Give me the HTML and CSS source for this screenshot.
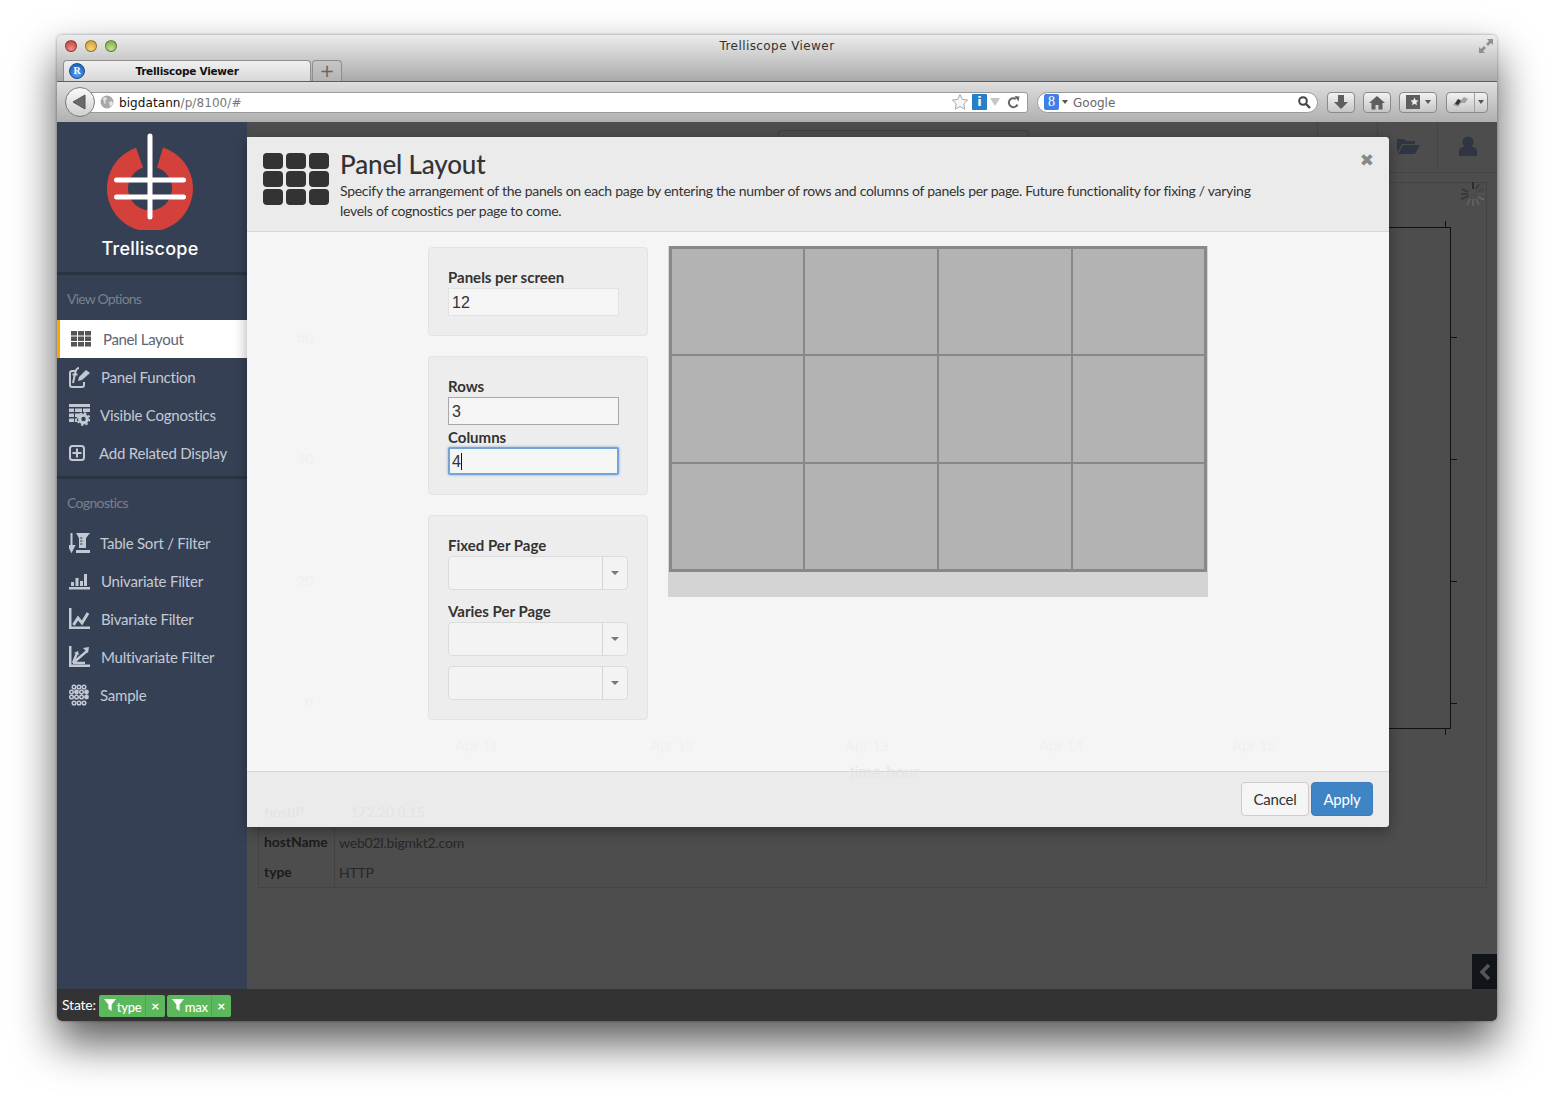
FILE: index.html
```html
<!DOCTYPE html>
<html lang="en">
<head>
<meta charset="utf-8">
<title>Trelliscope Viewer</title>
<link rel="stylesheet" href="styles.css">
</head>
<body>
<div class="window">
  <header class="titlebar">
    <div class="title-row">
      <div class="lights"><span class="light red"></span><span class="light yellow"></span><span class="light green"></span></div>
      <div class="win-title">Trelliscope Viewer</div>
      <svg class="resize" width="16" height="16" viewBox="0 0 16 16"><path d="M9 1h6v6l-2-2-3 3-2-2 3-3zM7 15H1V9l2 2 3-3 2 2-3 3z" fill="#8f8f8f"/></svg>
    </div>
    <div class="tab-row">
      <div class="tab">
        <span class="favicon">R</span>
        <span class="tab-label">Trelliscope Viewer</span>
        <span></span>
      </div>
      <div class="tab-new">+</div>
    </div>
  </header>
  <div class="toolbar">
    <div class="back"><svg width="14" height="16" viewBox="0 0 14 16"><path d="M13 1v14L1 8z" fill="#6a6a6a" stroke="#555"/></svg></div>
    <div class="urlbar">
      <svg class="globe" width="14" height="14" viewBox="0 0 14 14"><circle cx="7" cy="7" r="6.500" fill="#a8a8a8"/><path d="M3 3l3-1 1 2-2 2 1 3-2-1zM9 7l3-1 1 3-3 3z" fill="#e4e4e4"/></svg>
      <span class="url"><b>bigdatann</b>/p/8100/#</span>
      <span class="url-tools">
        <svg width="18" height="18" viewBox="0 0 18 18"><path d="M9 1.500l2.300 5 5.400.6-4 3.700 1.100 5.400L9 13.500l-4.800 2.700 1.100-5.400-4-3.700 5.400-.6z" fill="#f6f6f6" stroke="#a9a9a9"/></svg>
        <span class="info">i</span>
        <svg width="10" height="8" viewBox="0 0 10 8"><path d="M0 0h10L5 8z" fill="#c6c6c6"/></svg>
        <svg class="reload" width="13" height="13" viewBox="0 0 13 13"><path d="M10.500 8.500A4.500 4.500 0 1 1 9 3" fill="none" stroke="#666" stroke-width="2"/><path d="M7.500 0l5 .5-1 5z" fill="#666"/></svg>
      </span>
    </div>
    <div class="searchbar">
      <span class="gicon">8</span>
      <span class="caret-down"></span>
      <span class="search-text">Google</span>
      <svg width="13" height="13" viewBox="0 0 13 13"><circle cx="5" cy="5" r="3.800" fill="none" stroke="#444" stroke-width="2"/><path d="M8 8l4 4" stroke="#444" stroke-width="2.400"/></svg>
    </div>
    <div class="tbtn first"><svg width="16" height="16" viewBox="0 0 16 16"><path d="M5 1h6v7h4l-7 7-7-7h4z" fill="#5e5e5e"/></svg></div>
    <div class="tbtn"><svg width="16" height="15" viewBox="0 0 16 15"><path d="M8 1L0 8h2.500v6.500h4V10h3v4.500h4V8H16z" fill="#5e5e5e"/></svg></div>
    <div class="tbtn wide"><svg width="14" height="14" viewBox="0 0 14 14"><rect width="14" height="14" fill="#5e5e5e"/><path d="M8.500 2.500l1.200 2.700 2.800.3-2.100 1.900.6 2.900-2.500-1.500L6 10.300l.6-2.900-2.100-1.900 2.800-.3z" fill="#eee"/></svg><span class="caret-down"></span></div>
    <div class="tbtn split"><svg width="20" height="14" viewBox="0 0 20 14"><path d="M3 10l5-6 3 1 3-3 4 2-3 4-4 0-3 4z" fill="#a2a2a2"/><path d="M5 9l3-5 3 2-3 4z" fill="#333"/></svg><span class="split-arrow"><span class="caret-down"></span></span></div>
  </div>

  <div class="app">
    <div class="app-body">
      <aside class="sidebar">
        <div class="brand">
          <svg class="logo" width="100" height="100" viewBox="100 130 100 100">
            <path d="M136 147.800A43 43 0 1 0 163 147.500L157 167.600A22 22 0 1 1 143 167.600Z" fill="#d4403a"/>
            <path d="M150 136v81M116.500 180h67M116.500 197h67" stroke="#fff" stroke-width="5" stroke-linecap="round" fill="none"/>
          </svg>
          <div class="brand-name">Trelliscope</div>
        </div>
        <div class="group-title">View Options</div>
        <nav class="nav">
          <div class="item active">
            <svg width="20" height="16" viewBox="0 0 20 16"><g fill="#555"><rect width="6" height="4.500"/><rect x="7" width="6" height="4.500"/><rect x="14" width="6" height="4.500"/><rect y="5.500" width="6" height="4.500"/><rect x="7" y="5.500" width="6" height="4.500"/><rect x="14" y="5.500" width="6" height="4.500"/><rect y="11" width="6" height="4.500"/><rect x="7" y="11" width="6" height="4.500"/><rect x="14" y="11" width="6" height="4.500"/></g></svg>
            <span>Panel Layout</span>
          </div>
          <div class="item">
            <svg width="22" height="22" viewBox="0 0 22 22"><path d="M6 5H3a2 2 0 0 0-2 2v12a2 2 0 0 0 2 2h10a2 2 0 0 0 2-2v-3" fill="none" stroke="#c3c9d3" stroke-width="2"/><path d="M4 17l2-9c.5-3 1.500-6 4-6M3.500 8.500h5" fill="none" stroke="#c3c9d3" stroke-width="2"/><path d="M9 15l1-4 7-7 4 3-8 7z" fill="#c3c9d3"/></svg>
            <span>Panel Function</span>
          </div>
          <div class="item">
            <svg width="21" height="22" viewBox="0 0 21 22"><path d="M0 0h21v3H0zM0 4.500h5V8H0zM6 4.500h7V8H6zM14 4.500h7V8h-7zM0 9.500h5V13H0zM6 9.500h5V13H6zM0 14.500h5V18H0zM6 14.500h2V18H6z" fill="#c3c9d3"/><circle cx="14.500" cy="15" r="3.800" fill="none" stroke="#c3c9d3" stroke-width="3.200"/><circle cx="14.500" cy="15" r="6" fill="none" stroke="#c3c9d3" stroke-width="1.800" stroke-dasharray="2.300 2.400"/></svg>
            <span>Visible Cognostics</span>
          </div>
          <div class="item">
            <svg width="20" height="16" viewBox="0 0 20 16"><rect x="1" y="1" width="14" height="14" rx="2.500" fill="none" stroke="#c3c9d3" stroke-width="2"/><path d="M8 3.500v9M3.500 8h9" stroke="#c3c9d3" stroke-width="2"/></svg>
            <span>Add Related Display</span>
          </div>
        </nav>
        <div class="group-title second">Cognostics</div>
        <nav class="nav">
          <div class="item">
            <svg width="21" height="22" viewBox="0 0 21 22"><path d="M2.500 1v15M0 14l2.500 5 2.500-5z" fill="#c3c9d3" stroke="#c3c9d3" stroke-width="2"/><path d="M7 1h14l-4 5v10h-7V6z" fill="#c3c9d3"/><path d="M11 6h2.500M11 9h2.500M11 12h2.500" stroke="#364055"/><rect x="7" y="18" width="14" height="3" fill="#c3c9d3"/></svg>
            <span>Table Sort / Filter</span>
          </div>
          <div class="item">
            <svg width="22" height="18" viewBox="0 0 22 18"><path d="M0 15h21v2.500H0zM2 10h3v4H2zM6.500 6h3v8h-3zM11 9h3v5h-3zM15 2h3v12h-3z" fill="#c3c9d3"/></svg>
            <span>Univariate Filter</span>
          </div>
          <div class="item">
            <svg width="22" height="22" viewBox="0 0 22 22"><path d="M0 0h2.500v18.500H21V21H0z" fill="#c3c9d3"/><path d="M4.500 17l4.500-7 4 5 6-10" fill="none" stroke="#c3c9d3" stroke-width="3"/></svg>
            <span>Bivariate Filter</span>
          </div>
          <div class="item">
            <svg width="22" height="22" viewBox="0 0 22 22"><path d="M0 0h2.500v18.500H21V21H0z" fill="#c3c9d3"/><path d="M4 17L18 5M4 17l4-10M4 17h12" fill="none" stroke="#c3c9d3" stroke-width="2.400"/><path d="M14 2l6-1-1 6zM5 7l4-2 1 4z" fill="#c3c9d3"/></svg>
            <span>Multivariate Filter</span>
          </div>
          <div class="item">
            <svg width="21" height="22" viewBox="0 0 21 22"><g fill="none" stroke="#c3c9d3" stroke-width="1.500"><circle cx="5" cy="3" r="1.800"/><circle cx="10" cy="3" r="1.800"/><circle cx="15" cy="3" r="1.800"/><circle cx="2.500" cy="8" r="1.800"/><circle cx="12.500" cy="8" r="1.800"/><circle cx="2.500" cy="13" r="1.800"/><circle cx="7.500" cy="13" r="1.800"/><circle cx="12.500" cy="13" r="1.800"/><circle cx="5" cy="19" r="1.800"/><circle cx="10" cy="19" r="1.800"/><circle cx="15" cy="19" r="1.800"/></g><g fill="#c3c9d3"><circle cx="7.500" cy="8" r="2.400"/><circle cx="17.500" cy="8" r="2.400"/><circle cx="17.500" cy="13" r="2.400"/></g></svg>
            <span>Sample</span>
          </div>
        </nav>
      </aside>

      <main class="main">
        <div class="topnav">
          <div class="pager-outline"></div>
          <div class="nav-cell"></div>
          <div class="nav-cell">
            <svg width="24" height="18" viewBox="0 0 24 18"><path d="M1 2h7l2 2h9v3H6L1 16z" fill="#2f3542"/><path d="M7 8h17l-5 9H2z" fill="#2f3542"/></svg>
          </div>
          <div class="nav-cell">
            <svg width="20" height="20" viewBox="0 0 20 20"><circle cx="10" cy="6" r="5.500" fill="#2f3542"/><path d="M1 20v-4c0-4 3-6 9-6s9 2 9 6v4z" fill="#2f3542"/></svg>
          </div>
        </div>
        <section class="panel">
          <div class="plot-area">
            <div class="plot"><i class="tick top"></i><i class="tick bottom"></i><i class="tick r1"></i><i class="tick r2"></i><i class="tick r3"></i><i class="tick r4"></i></div>
            <svg class="spinner" width="26" height="26" viewBox="0 0 26 26"><g stroke="#333" stroke-width="1.500" fill="none"><path d="M13 1v7" stroke="#222"/><path d="M19 3l-3 5" stroke="#3a3a3a"/><path d="M24 8l-6 3" stroke="#444"/><path d="M25 13h-7" stroke="#555"/><path d="M24 19l-6-3" stroke="#666"/><path d="M19 24l-3-6" stroke="#666"/><path d="M13 25v-7" stroke="#666"/><path d="M7 24l3-6" stroke="#666"/></g><path d="M1 18l8-3M1 13h7M2 8l6 3" stroke="#3a3a3a" stroke-width="2"/></svg>
          </div>
          <div class="meta-row"></div>
          <div class="meta-row"><div class="meta-key">hostName</div><div class="meta-val">web02l.bigmkt2.com</div></div>
          <div class="meta-row"><div class="meta-key">type</div><div class="meta-val">HTTP</div></div>
        </section>
        <div class="side-toggle"><svg width="12" height="18" viewBox="0 0 12 18"><path d="M10 2L3 9l7 7" fill="none" stroke="#555" stroke-width="3.600"/></svg></div>

        <div class="modal">
          <div class="modal-head">
            <div class="big-grid"><i></i><i></i><i></i><i></i><i></i><i></i><i></i><i></i><i></i></div>
            <div class="head-text">
              <h1>Panel Layout</h1>
              <p>Specify the arrangement of the panels on each page by entering the number of rows and columns of panels per page. Future functionality for fixing / varying<br>levels of cognostics per page to come.</p>
            </div>
            <div class="close">&#10006;</div>
          </div>
          <div class="modal-body">
            <div class="wells">
              <div class="well">
                <div class="lbl">Panels per screen</div>
                <div class="field muted">12</div>
              </div>
              <div class="well">
                <div class="lbl">Rows</div>
                <div class="field">3</div>
                <div class="lbl gap2">Columns</div>
                <div class="field focus">4<span class="text-caret"></span></div>
              </div>
              <div class="well">
                <div class="lbl">Fixed Per Page</div>
                <div class="select"><span class="sel-arrow"></span></div>
                <div class="lbl gap11">Varies Per Page</div>
                <div class="select"><span class="sel-arrow"></span></div>
                <div class="select gap10"><span class="sel-arrow"></span></div>
              </div>
            </div>
            <div class="preview">
              <div class="cells"><i></i><i></i><i></i><i></i><i></i><i></i><i></i><i></i><i></i><i></i><i></i><i></i></div>
            </div>
            <div class="ghost ghost-y1">60</div>
            <div class="ghost ghost-y2">40</div>
            <div class="ghost ghost-y3">20</div>
            <div class="ghost ghost-y4">0</div>
            <div class="ghost ghost-a1">Apr 11</div>
            <div class="ghost ghost-a2">Apr 12</div>
            <div class="ghost ghost-a3">Apr 13</div>
            <div class="ghost ghost-a4">Apr 14</div>
            <div class="ghost ghost-a5">Apr 15</div>
            <div class="ghost ghost-time">time.hour</div>
          </div>
          <div class="modal-foot">
            <div class="ghost-ip"><span>hostIP</span><span>172.20.0.15</span></div>
            <button class="btn">Cancel</button>
            <button class="btn primary">Apply</button>
          </div>
        </div>
      </main>
    </div>
    <footer class="statebar">
      <span class="state-label">State:</span>
      <span class="badge type"><span class="badge-name"><svg width="12" height="12" viewBox="0 0 11 11"><path d="M0 0h11L7 5v6L4 9V5z" fill="#fff"/></svg>type</span><span class="badge-x">&#215;</span></span>
      <span class="badge max"><span class="badge-name"><svg width="12" height="12" viewBox="0 0 11 11"><path d="M0 0h11L7 5v6L4 9V5z" fill="#fff"/></svg>max</span><span class="badge-x">&#215;</span></span>
    </footer>
  </div>
</div>
</body>
</html>
```
FILE: styles.css
```css
* { box-sizing: border-box; }
html, body { margin: 0; height: 1100px; background: #fff; overflow: hidden; }
body { padding: 35px 57px 0; font-family: "Lato", "Open Sans", sans-serif; color: #333; }

.window {
  width: 1440px;
  height: 986px;
  border-radius: 5px;
  display: flex;
  flex-direction: column;
  box-shadow: 0 22px 44px rgba(0,0,0,.65), 0 0 3px rgba(0,0,0,.4);
}

/* browser chrome */
.titlebar {
  height: 47px;
  flex: none;
  border-radius: 5px 5px 0 0;
  background: linear-gradient(#ececec, #dcdcdc 25%, #b4b4b4 85%, #a8a8a8);
  border-bottom: 1px solid #5f5f5f;
  display: flex;
  flex-direction: column;
  font-family: "DejaVu Sans", sans-serif;
}
.title-row { height: 25px; display: grid; grid-template-columns: 1fr auto 1fr; align-items: center; padding: 0 8px 3px; }
.lights { display: flex; gap: 8px; }
.light { width: 12px; height: 12px; border-radius: 50%; border: 1px solid rgba(0,0,0,.35); }
.red { background: radial-gradient(circle at 50% 80%, #f08d88, #c13a35); }
.yellow { background: radial-gradient(circle at 50% 80%, #f5d67a, #d1952a); }
.green { background: radial-gradient(circle at 50% 80%, #c5e08a, #74a83d); }
.win-title { font-size: 12px; color: #333; letter-spacing: .42px; }
.resize { justify-self: end; margin-right: -5px; }
.tab-row { display: flex; height: 21px; padding-left: 6px; }
.tab {
  width: 248px;
  height: 21px;
  display: grid;
  grid-template-columns: 1fr auto 1fr;
  align-items: center;
  background: linear-gradient(#f0f0f0, #d8d8d8);
  border: 1px solid #8e8e8e;
  border-bottom: 0;
  border-radius: 4px 4px 0 0;
}
.tab-label { font-size: 10.500px; font-weight: bold; color: #111; letter-spacing: -.25px; }
.favicon {
  width: 16px; height: 16px; margin-left: 5px; border-radius: 50%;
  background: radial-gradient(circle at 50% 70%, #54a4f0, #1450b0);
  border: 1px solid #1a4a90;
  color: #fff; font: bold 10px/14px "Liberation Serif", serif; text-align: center;
}
.tab-new {
  width: 30px; height: 21px; margin-left: 1px;
  background: linear-gradient(#c6c6c6, #b4b4b4);
  border: 1px solid #8e8e8e; border-bottom: 0; border-radius: 4px 4px 0 0;
  color: #666; text-align: center; font: 18px/20px "DejaVu Sans", sans-serif;
}
.toolbar {
  height: 40px; flex: none;
  background: linear-gradient(#dedede, #b0b0b0);
  display: flex; align-items: center;
  padding: 0 9px 0 8px;
  font-family: "DejaVu Sans", sans-serif;
}
.back {
  width: 30px; height: 30px; border-radius: 50%; flex: none;
  background: linear-gradient(#fafafa, #cfcfcf);
  border: 1px solid #7b7b7b;
  display: flex; align-items: center; justify-content: center; padding-right: 3px;
  position: relative; z-index: 1; margin-right: -9px;
}
.urlbar {
  flex: 1; height: 21px; display: flex; align-items: center;
  background: #fff; border: 1px solid #9a9a9a; border-radius: 3px;
  padding: 0 7px 0 14px;
}
.globe { margin-right: 5px; flex: none; margin-left: -1px; }
.url { font-size: 12px; color: #777; letter-spacing: .08px; flex: 1; padding-top: 1px; }
.url b { font-weight: normal; color: #111; }
.url-tools { display: flex; align-items: center; gap: 3px; }
.reload { margin-left: 4px; }
.info { width: 15px; height: 16px; background: #2580c8; color: #fff; font: bold 13px/16px "DejaVu Sans", sans-serif; text-align: center; border-radius: 1px; }
.searchbar {
  width: 281px; height: 21px; margin-left: 9px; flex: none;
  background: #fff; border: 1px solid #9a9a9a; border-radius: 11px;
  display: flex; align-items: center; padding: 0 6px;
}
.gicon { width: 15px; height: 16px; background: #3f7fe8; color: #fff; font: 14px/16px "Liberation Serif", serif; text-align: center; border-radius: 2px; }
.caret-down { width: 0; height: 0; border: 3px solid transparent; border-top: 4px solid #555; border-bottom: 0; margin-left: 3px; }
.search-text { flex: 1; margin-left: 5px; font-size: 12px; color: #666; padding-top: 1px; }
.tbtn {
  width: 28px; height: 21px; margin-left: 8px; flex: none;
  background: linear-gradient(#f2f2f2, #c6c6c6);
  border: 1px solid #8a8a8a; border-radius: 4px;
  display: flex; align-items: center; justify-content: center;
}
.tbtn.first { margin-left: 9px; }
.tbtn.wide { width: 38px; gap: 2px; }
.tbtn.split { width: 42px; margin-left: 9px; justify-content: flex-start; padding-left: 3px; }
.split-arrow { margin-left: auto; width: 13px; height: 100%; border-left: 1px solid #a0a0a0; display: flex; align-items: center; justify-content: center; }
.split-arrow .caret-down { margin-left: 0; }

/* application */
.app { flex: 1; min-height: 0; display: flex; flex-direction: column; border-radius: 0 0 5px 5px; overflow: hidden; }
.app-body { flex: 1; min-height: 0; display: flex; }
.sidebar { width: 190px; flex: none; background: #364055; }
.brand { height: 153px; border-bottom: 3px solid #2b3443; display: flex; flex-direction: column; align-items: center; padding: 8px 4px 0 0; }
.logo { display: block; }
.brand-name { font-family: "Inter", sans-serif; font-weight: 500; color: #fff; font-size: 18px; line-height: 22px; margin-top: 8px; letter-spacing: .25px; }
.group-title { height: 45px; padding: 15px 0 0 10px; font-size: 14px; line-height: 18px; color: #76818f; letter-spacing: -.78px; }
.group-title.second { height: 48px; margin-top: 4px; border-top: 3px solid #2b3443; padding-top: 15px; letter-spacing: -.65px; }
.item {
  height: 38px; display: flex; align-items: center; gap: 10px;
  padding-left: 12px; color: #c4cad4; font-size: 15px; letter-spacing: -.22px;
}
.item svg { flex: none; }
.item.active { background: #fff; color: #5b6472; border-left: 3px solid #fea500; padding-left: 11px; gap: 12px; letter-spacing: -.35px; }

.main { flex: 1; min-width: 0; position: relative; background: #4d4d4d; display: flex; flex-direction: column; }
.topnav { height: 51px; flex: none; border-bottom: 1px solid #444; display: flex; justify-content: flex-end; padding-bottom: 3px; }
.pager-outline { position: absolute; left: 531px; top: 8px; width: 251px; height: 30px; border: 1px solid #3e3e3e; border-radius: 4px; }
.nav-cell { width: 60px; border-left: 1px solid #444; display: flex; align-items: center; justify-content: center; }
.panel { margin: 9px 10px 0 11px; height: 706px; border: 1px solid #444; display: flex; flex-direction: column; flex: none; }
.plot-area { flex: 1; position: relative; }
.plot { position: absolute; right: 35px; top: 44px; width: 400px; height: 502px; border: 1px solid #111; border-left: 0; }
.tick { position: absolute; background: #111; }
.tick.top, .tick.bottom { right: 4px; width: 1px; height: 6px; }
.tick.top { top: -7px; }
.tick.bottom { bottom: -7px; }
.tick.r1, .tick.r2, .tick.r3, .tick.r4 { right: -7px; width: 6px; height: 1px; }
.tick.r1 { top: 109px; }
.tick.r2 { top: 231px; }
.tick.r3 { top: 353px; }
.tick.r4 { top: 475px; }
.spinner { position: absolute; right: 0; top: -2px; }
.meta-row { height: 30px; display: flex; align-items: center; font-size: 14px; }
.meta-key { width: 76px; height: 100%; padding-left: 5px; border-right: 1px solid #444; font-weight: bold; color: #1c1c1c; line-height: 30px; letter-spacing: -.08px; }
.meta-val { padding-left: 4px; color: #272727; letter-spacing: -.2px; }
.side-toggle { position: absolute; right: 0; bottom: 0; width: 25px; height: 35px; background: #111419; display: flex; align-items: center; justify-content: center; }

/* modal */
.modal {
  position: absolute; left: 0; top: 15px; width: 1142px; height: 690px;
  display: flex; flex-direction: column;
  background: #f5f5f5;
  border-radius: 0 4px 4px 0;
  box-shadow: 0 4px 14px rgba(0,0,0,.35);
  overflow: hidden;
}
.modal-head { height: 95px; flex: none; background: #ebebeb; border-bottom: 1px solid #d6d6d6; display: flex; padding: 16px 0 0 16px; gap: 11px; position: relative; }
.big-grid { width: 66px; height: 52px; display: grid; grid-template-columns: repeat(3, 20px); grid-template-rows: repeat(3, 16px); gap: 2px 3px; }
.big-grid i { background: #333; border-radius: 4px; }
.head-text h1 { margin: -4px 0 0; font-size: 26px; line-height: 30px; font-weight: 500; color: #333; letter-spacing: -.15px; }
.head-text p { margin: 2px 0 0; font-size: 14px; line-height: 20px; color: #333; letter-spacing: -.28px; white-space: nowrap; }
.close { position: absolute; right: 15px; top: 13px; font-size: 17px; line-height: 20px; color: #888; font-family: "DejaVu Sans", sans-serif; }
.modal-body { flex: 1; min-height: 0; display: flex; padding: 14px 0 0 181px; position: relative; z-index: 1; }
.wells { width: 220px; flex: none; display: flex; flex-direction: column; gap: 20px; padding-top: 1px; position: relative; z-index: 1; }
.well { background: #ededed; border: 1px solid #e3e3e3; border-radius: 4px; padding: 19px 19px 19px; }
.lbl { font-size: 15px; line-height: 20px; font-weight: bold; color: #333; }
.gap2 { margin-top: 2px; }
.gap11 { margin-top: 11px; }
.field {
  width: 171px; height: 28px; margin-top: 1px;
  border: 1px solid #a8a8a8; background: #f5f5f5;
  padding: 0 3px; font: 16px/28px "Liberation Sans", sans-serif; color: #333;
}
.field.muted { border-color: #e2e2e2; }
.field.focus { margin-top: 0; border: 2px solid #74a4d6; padding: 0 2px; line-height: 26px; box-shadow: 0 0 3px rgba(90,150,215,.7); border-radius: 2px; }
.text-caret { display: inline-block; width: 1px; height: 17px; background: #111; vertical-align: -3px; }
.select { width: 180px; height: 34px; margin-top: 1px; border: 1px solid #dcdcdc; border-radius: 4px; background: #f3f3f3; display: flex; justify-content: flex-end; }
.gap10 { margin-top: 10px; }
.sel-arrow { width: 25px; border-left: 1px solid #d4d4d4; display: flex; align-items: center; justify-content: center; }
.sel-arrow::before { content: ""; border: 4px solid transparent; border-top: 4px solid #777; border-bottom: 0; }
.preview { width: 540px; height: 351px; margin-left: 20px; background: #d4d4d4; padding: 0 1px; flex: none; }
.cells { height: 326px; border: 2px solid #888; display: grid; grid-template-columns: 133px 134px 134px 1fr; grid-template-rows: repeat(3, 1fr); }
.cells i { background: #b3b3b3; border: 1px solid #888; }
.ghost { position: absolute; top: 505px; color: #f0f0f0; font-size: 15px; line-height: 18px; font-family: "Liberation Sans", sans-serif; }
.ghost-y1, .ghost-y2, .ghost-y3, .ghost-y4 { left: 50px; }
.ghost-y1 { top: 97px; }
.ghost-y2 { top: 218px; }
.ghost-y3 { top: 340px; }
.ghost-y4 { top: 462px; left: 58px; }
.ghost-a1 { left: 208px; }
.ghost-a2 { left: 403px; }
.ghost-a3 { left: 598px; }
.ghost-a4 { left: 792px; }
.ghost-a5 { left: 985px; }
.ghost-time { left: 603px; top: 532px; font-size: 16px; letter-spacing: .3px; color: #e5e5e5; }

.modal-foot { height: 56px; flex: none; background: #ebebeb; border-top: 1px solid #d6d6d6; display: flex; justify-content: flex-end; align-items: flex-start; gap: 2px; padding: 10px 16px 0 0; position: relative; }
.ghost-ip { position: absolute; left: 18px; top: 31px; display: flex; gap: 46px; font-size: 14px; line-height: 18px; color: #e4e4e4; }
.btn { height: 34px; border: 1px solid #ccc; border-radius: 4px; background: #f5f5f5; font: 15px "Lato", sans-serif; color: #333; width: 68px; padding: 0; letter-spacing: -.2px; }
.btn.primary { width: 62px; background: #3f84c5; border-color: #3b7dbb; color: #fff; }

/* state bar */
.statebar { height: 32px; flex: none; background: #333; display: flex; align-items: center; padding-left: 5px; color: #fff; }
.state-label { font-size: 14px; letter-spacing: -.2px; margin-right: 3px; margin-top: -1px; }
.badge { height: 22px; margin-top: 2px; margin-right: 2px; background: #5cb85c; border-radius: 2px; display: flex; font-size: 13px; font-weight: 500; }
.badge-name { display: flex; align-items: center; gap: 1px; padding: 1px 0 0 5px; border-right: 1px solid #4fa64f; letter-spacing: -.3px; }
.badge-name svg { margin-top: -3px; }
.badge.type .badge-name { width: 47px; }
.badge.max .badge-name { width: 45px; }
.badge-x { width: 19px; text-align: center; font-size: 14px; line-height: 22px; font-weight: bold; }
```
